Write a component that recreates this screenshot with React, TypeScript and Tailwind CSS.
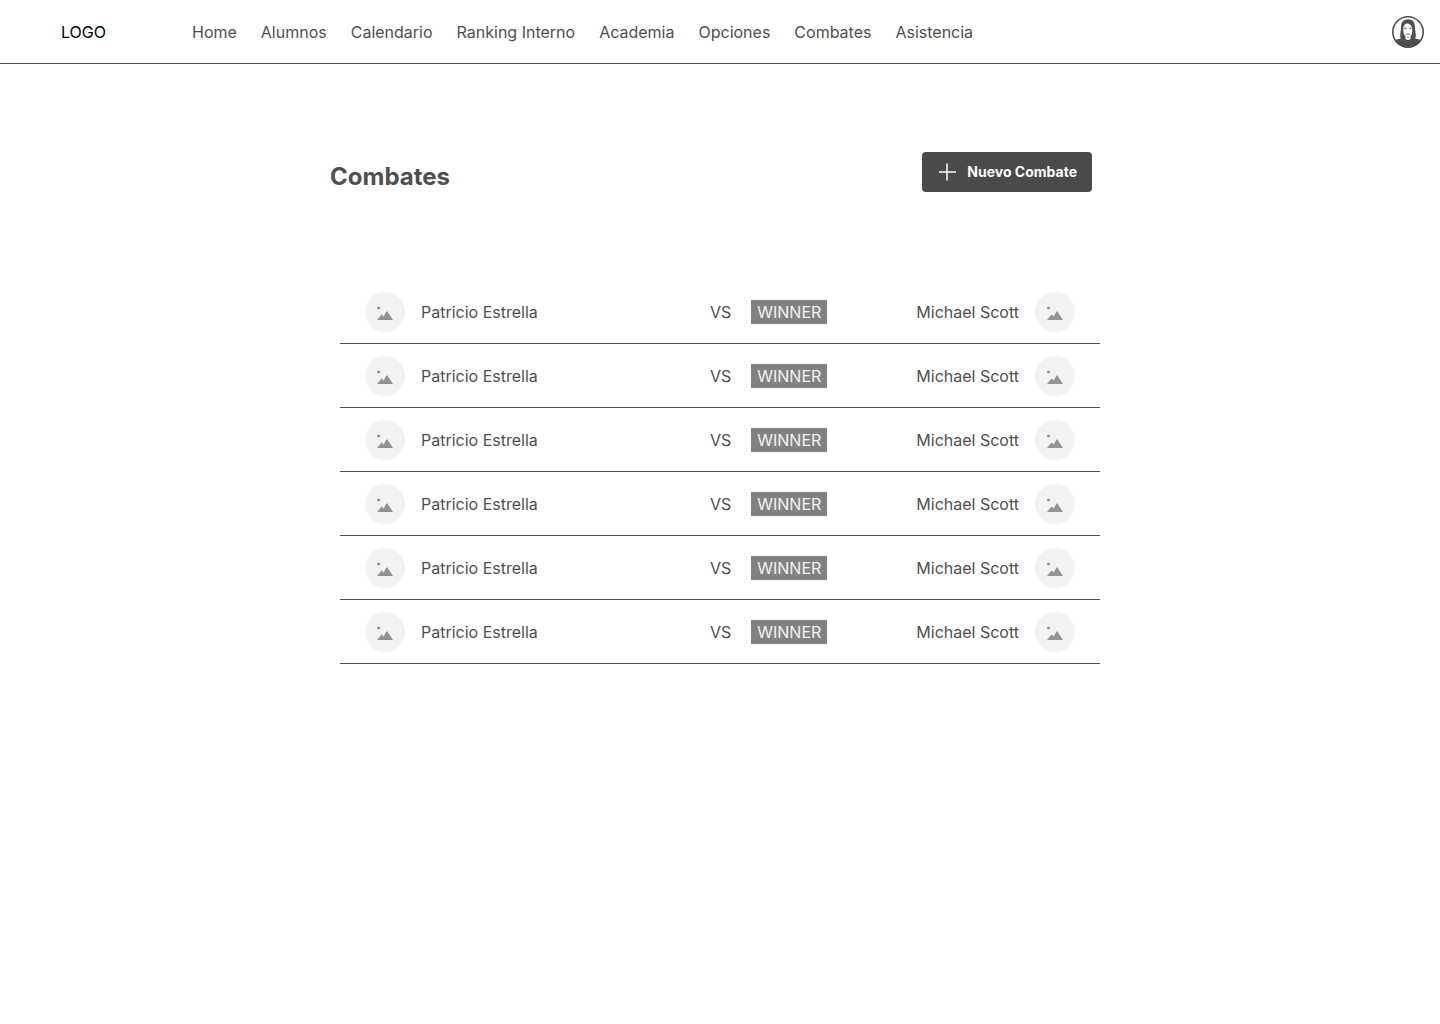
const nav = ['Home', 'Alumnos', 'Calendario', 'Ranking Interno', 'Academia', 'Opciones', 'Combates', 'Asistencia'];

const fights = Array.from({ length: 6 }, () => ({ left: 'Patricio Estrella', right: 'Michael Scott' }));

function Photo() {
  return (
    <span className="flex size-10 shrink-0 items-center justify-center rounded-full bg-[#f2f2f2]">
      <svg className="size-10" viewBox="0 0 40 40" fill="#929292" aria-hidden="true">
        <circle cx="13.5" cy="16" r="1.5" />
        <path d="M12 28l4.500-5.500 2 2L22 19l6 9z" />
      </svg>
    </span>
  );
}

function Avatar() {
  return (
    <svg className="size-8" viewBox="0 0 32 32" aria-hidden="true">
      <circle cx="16" cy="16" r="15.200" fill="#fff" />
      <path fill="#4f4f4f" d="M3 24.500c2-1.500 5-1.500 8-2.500l2.500 1c1.500 1.200 3.500 1.200 5 0L21 22c3 1 6 1 8 2.500-3 4.500-7.500 7-13 7s-10-2.500-13-7z" />
      <path fill="#4f4f4f" d="M16 3.200c-4.500 0-6.900 3-6.900 7.300 0 4.500-1.600 8-.6 11.500.8 1.800 3.200 2 5 1v-2.500c-1.500-1.500-2.200-3.500-2.200-7.500 0-2.500.7-4.300 3-5.500 2.500-.2 5.500 1 6 5.500 0 4-.7 6-1.800 7.500V23c1.800 1 4.200.8 5-1 1-3.500-.6-7-.6-11.500C22.900 6.200 20.500 3.200 16 3.200z" />
      <path fill="#4f4f4f" d="M12.300 11.700h2.200v1h-2.200zM17.300 11.700h2.200v1h-2.200z" />
      <path fill="none" stroke="#4f4f4f" strokeWidth=".8" d="M13.600 18.900c1-1.100 3.800-1.100 4.800 0" />
      <path fill="#4f4f4f" d="M15.400 20.600h1.200v1h-1.200z" />
      <circle cx="16" cy="16" r="15.200" fill="none" stroke="#4f4f4f" strokeWidth="1.600" />
    </svg>
  );
}

export default function App() {
  return (
    <div className="min-h-screen bg-white font-['Inter',sans-serif] text-base text-[#4f4f4f]">
      <header className="flex h-16 items-center border-b border-[#4f4f4f] pr-4">
        <a href="#" className="w-48 shrink-0 pl-[61px] text-black">LOGO</a>
        <nav className="flex flex-1 gap-6">
          {nav.map((item) => (
            <a key={item} href="#">{item}</a>
          ))}
        </nav>
        <button type="button" aria-label="Perfil"><Avatar /></button>
      </header>
      <main className="mx-auto max-w-[780px] pt-[88px]">
        <div className="flex items-start justify-between pr-[18px]">
          <h1 className="pt-[9px] text-2xl font-bold">Combates</h1>
          <button type="button" className="flex h-10 items-center gap-2 rounded bg-[#4a4a4a] px-[15px] text-sm font-bold text-white">
            <svg className="size-[22px]" viewBox="0 0 22 22" stroke="currentColor" strokeWidth="1.500" aria-hidden="true">
              <path d="M2 11h17M10 2.500v17" />
            </svg>
            Nuevo Combate
          </button>
        </div>
        <ul className="mx-[10px] mt-[87px]">
          {fights.map((fight, i) => (
            <li key={i} className="flex h-16 items-center border-b border-[#4f4f4f] px-[25px]">
              <Photo />
              <span className="ml-4 flex-1">{fight.left}</span>
              <span>VS</span>
              <span className="ml-5 bg-[#828282] px-1.5 text-[#f2f2f2]">WINNER</span>
              <span className="ml-[89px] mr-4">{fight.right}</span>
              <Photo />
            </li>
          ))}
        </ul>
      </main>
    </div>
  );
}
